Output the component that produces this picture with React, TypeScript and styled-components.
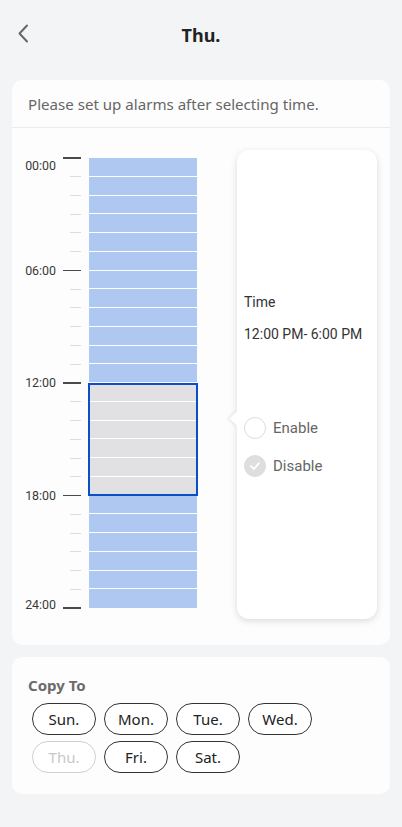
import React, { FC } from 'react'
import styled, { createGlobalStyle } from 'styled-components'

const GlobalStyle = createGlobalStyle`
    html, body { margin: 0; padding: 0; background: #f3f4f6; }
    body { font-family: "Noto Sans", Roboto, "Liberation Sans", sans-serif; }
    * { box-sizing: border-box; }
`

const HOUR = 18.75
const blue = '#afc8f2'

const Page = styled.div`
    width: 402px; min-height: 827px;
    padding: 0 12px 20px;
    background: #f3f4f6;
`

const Header = styled.div`
    height: 70px;
    display: flex; align-items: center; justify-content: center;
    position: relative;
    margin-bottom: 10px;
    h1 {
        margin: 0;
        font-size: 18px; font-weight: 700;
        color: #222;
    }
`

const Back = styled.button`
    position: absolute; left: 2px; top: 24px;
    border: 0; background: none; padding: 0;
    width: 20px; height: 20px;
    display: flex;
`

const Card = styled.div`
    background: #fdfdfd;
    border-radius: 10px;
`

const Hint = styled.div`
    height: 48px;
    padding: 0 16px;
    display: flex; align-items: center;
    font-size: 15.1px; color: #666;
    border-bottom: 1px solid #ececec;
`

const Schedule = styled.div`
    height: 517px;
    display: flex; align-items: flex-start;
`

const Ruler = styled.div`
    margin-top: 29px;
    width: 69px; height: 452px;
    display: flex; flex-direction: column; justify-content: space-between;
`

const TickRow = styled.div<{ major: boolean; shift: number }>`
    height: 1.5px;
    display: flex; align-items: center; justify-content: flex-end;
    position: relative;
    &::after {
        content: '';
        width: ${ p => p.major ? 18 : 11 }px;
        height: ${ p => p.major ? 1.5 : 1 }px;
        background: ${ p => p.major ? '#4a4a4a' : '#dcdcdc' };
    }
    span {
        position: absolute; right: 25px;
        top: ${ p => -8 + p.shift }px;
        font-family: Roboto, sans-serif;
        font-size: 12.4px; line-height: 16px;
        color: #3a3a3a;
    }
`

const Bars = styled.div`
    margin: 30px 0 0 8px;
    width: 108px;
    position: relative;
`

const Slot = styled.div<{ selected: boolean; last: boolean }>`
    height: ${ HOUR }px;
    background: ${ p => p.selected ? '#e1e1e3' : blue };
    border-bottom: ${ p => p.last ? 0 : 1.5 }px solid #fff;
`

const Selection = styled.div`
    position: absolute;
    left: -1px; right: -1px;
    border: 2px solid #0b4fc6;
`

const Popup = styled.div`
    margin: 22px 0 0 40px;
    width: 140px; height: 469px;
    background: #fff;
    border-radius: 12px;
    box-shadow: 0 2px 7px rgba(0, 0, 0, 0.14);
    position: relative;
    display: flex; flex-direction: column; justify-content: center;
    padding: 0 7px;
    font-family: Roboto, sans-serif;
`

const Arrow = styled.div`
    position: absolute; left: -5px;
    width: 11px; height: 11px;
    background: #fff;
    transform: rotate(45deg);
    box-shadow: -2px 2px 3px rgba(0, 0, 0, 0.06);
`

const Label = styled.div<{ gap: number }>`
    font-size: 14px; line-height: 20px;
    color: #333;
    margin-bottom: ${ p => p.gap }px;
`

const Option = styled.div<{ checked: boolean }>`
    display: flex; align-items: center; gap: 7px;
    height: 22px;
    margin-bottom: 16px;
    &:last-child { margin-bottom: 0; }
    font-size: 15px; color: #666;
    .dot {
        width: 22px; height: 22px;
        border-radius: 50%;
        border: 1.5px solid #ddd;
        background: ${ p => p.checked ? '#dedede' : '#fff' };
        display: flex; align-items: center; justify-content: center;
    }
`

const CopyCard = styled(Card)`
    margin-top: 12px;
    padding: 18px 16px 21px;
    h2 {
        margin: 0 0 8px;
        font-size: 15px; line-height: 20px; font-weight: 700;
        color: #6b6b6b;
    }
`

const Chips = styled.div`
    display: grid;
    grid-template-columns: repeat(4, 64px);
    gap: 6px 8px;
    margin-left: 4px;
`

const Chip = styled.button<{ disabled?: boolean }>`
    height: 32px;
    border-radius: 16px;
    border: 1.2px solid ${ p => p.disabled ? '#d0d0d0' : '#333' };
    background: #fff;
    font-family: inherit;
    font-size: 15px;
    color: ${ p => p.disabled ? '#c8c8c8' : '#222' };
    padding: 0;
`

const hours = Array.from({ length: 25 }, (_, i) => i)
const slots = Array.from({ length: 24 }, (_, i) => i)
const days = [ 'Sun.', 'Mon.', 'Tue.', 'Wed.', 'Thu.', 'Fri.', 'Sat.' ]
const selStart = 12, selEnd = 18

const labelFor = (h: number) => h % 6 === 0 ? `${ String(h).padStart(2, '0') }:00` : ''

export const App: FC = () => <Page>
    <GlobalStyle />
    <Header>
        <Back>
            <svg width="20" height="20" viewBox="0 0 20 20">
                <path d="M13 1.5 L5.5 9.5 L13 17.5" fill="none" stroke="#666" strokeWidth="2" strokeLinecap="round" strokeLinejoin="round" />
            </svg>
        </Back>
        <h1>Thu.</h1>
    </Header>
    <Card>
        <Hint>Please set up alarms after selecting time.</Hint>
        <Schedule>
            <Ruler>
                { hours.map(h =>
                    <TickRow key={ h } major={ h % 6 === 0 } shift={ h === 0 ? 9 : h === 24 ? -2 : 1 }>
                        { labelFor(h) && <span>{ labelFor(h) }</span> }
                    </TickRow>
                ) }
            </Ruler>
            <Bars>
                { slots.map(s =>
                    <Slot key={ s } selected={ s >= selStart && s < selEnd } last={ s === 23 } />
                ) }
                <Selection style={{ top: selStart * HOUR, height: (selEnd - selStart) * HOUR + 0.5 }} />
            </Bars>
            <Popup>
                <Arrow style={{ top: ((selStart + selEnd) / 2) * HOUR + 8 - 22 - 4 }} />
                <Label gap={ 12 }>Time</Label>
                <Label gap={ 73 }>12:00 PM- 6:00 PM</Label>
                <Option checked={ false }><div className="dot" />Enable</Option>
                <Option checked={ true }>
                    <div className="dot">
                        <svg width="12" height="12" viewBox="0 0 12 12">
                            <path d="M2 6.2 L5 9 L10 3.2" fill="none" stroke="#fff" strokeWidth="1.8" strokeLinecap="round" strokeLinejoin="round" />
                        </svg>
                    </div>
                    Disable
                </Option>
            </Popup>
        </Schedule>
    </Card>
    <CopyCard>
        <h2>Copy To</h2>
        <Chips>
            { days.map(d => <Chip key={ d } disabled={ d === 'Thu.' }>{ d }</Chip>) }
        </Chips>
    </CopyCard>
</Page>

export default App
